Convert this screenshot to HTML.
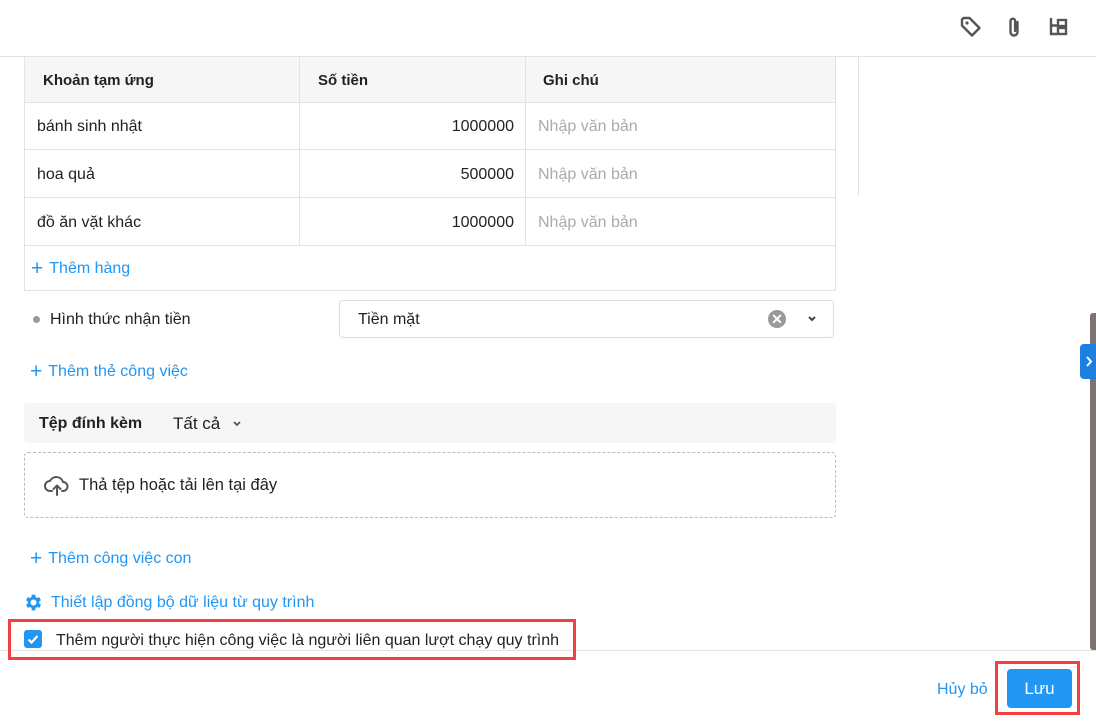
<!DOCTYPE html>
<html><head><meta charset="utf-8"><style>
*{box-sizing:border-box;margin:0;padding:0}
body{width:1096px;height:721px;position:relative;background:#fff;font-family:"Liberation Sans",sans-serif;font-size:16px;letter-spacing:0;color:#222;overflow:hidden}
.a{position:absolute}
.hl{background:#e3e3e3}
.blue{color:#2196f3}
.cell{position:absolute;display:flex;align-items:center;padding-top:2px}
.b{font-weight:bold;font-size:15px;letter-spacing:0}
</style></head><body>
<div class="a hl" style="left:0;top:56px;width:1096px;height:1px"></div>
<svg class="a" style="left:959px;top:15px" width="24" height="24" viewBox="0 0 24 24" fill="none" stroke="#555" stroke-width="2.4" stroke-linejoin="round"><path d="M3 4.5v6L13 20.5l7.5-7.5L10.5 3h-6z"/><circle cx="8" cy="8" r="1.6" fill="#555" stroke="none"/></svg>
<svg class="a" style="left:1005px;top:15px" width="18" height="24" viewBox="0 0 18 24" fill="none" stroke="#555" stroke-width="2.4" stroke-linecap="round"><path d="M12.5 7v10a3.5 3.5 0 0 1-7 0V6a2.3 2.3 0 0 1 4.6 0v10"/></svg>
<svg class="a" style="left:1048px;top:16px" width="22" height="22" viewBox="0 0 22 22" fill="none" stroke="#555" stroke-width="2.4"><path d="M3 2v16h6M3 9.5h6"/><rect x="10" y="4" width="8" height="6"/><rect x="10" y="12" width="8" height="6"/></svg>
<div class="a hl" style="left:858px;top:57px;width:1px;height:139px"></div>
<div class="a" style="left:24px;top:57px;width:812px;height:234px;border:1px solid #e3e3e3;border-top:none"></div>
<div class="a" style="left:25px;top:57px;width:810px;height:45px;background:#f6f6f6"></div>
<div class="a hl" style="left:24px;top:102px;width:812px;height:1px"></div>
<div class="a hl" style="left:24px;top:149px;width:812px;height:1px"></div>
<div class="a hl" style="left:24px;top:197px;width:812px;height:1px"></div>
<div class="a hl" style="left:24px;top:245px;width:812px;height:1px"></div>
<div class="a hl" style="left:299px;top:57px;width:1px;height:188px"></div>
<div class="a hl" style="left:525px;top:57px;width:1px;height:188px"></div>
<div class="cell b" style="left:43px;top:57px;height:45px">Khoản tạm ứng</div>
<div class="cell b" style="left:318px;top:57px;height:45px">Số tiền</div>
<div class="cell b" style="left:543px;top:57px;height:45px">Ghi chú</div>
<div class="cell" style="left:37px;top:103px;height:46px">bánh sinh nhật</div>
<div class="cell" style="left:300px;width:214px;justify-content:flex-end;top:103px;height:46px">1000000</div>
<div class="cell" style="left:538px;top:103px;height:46px;color:#aaa">Nhập văn bản</div>
<div class="cell" style="left:37px;top:150px;height:47px">hoa quả</div>
<div class="cell" style="left:300px;width:214px;justify-content:flex-end;top:150px;height:47px">500000</div>
<div class="cell" style="left:538px;top:150px;height:47px;color:#aaa">Nhập văn bản</div>
<div class="cell" style="left:37px;top:198px;height:47px">đồ ăn vặt khác</div>
<div class="cell" style="left:300px;width:214px;justify-content:flex-end;top:198px;height:47px">1000000</div>
<div class="cell" style="left:538px;top:198px;height:47px;color:#aaa">Nhập văn bản</div>
<div class="cell blue" style="left:31px;top:246px;height:44px"><span style="font-size:21px;margin-right:6px">+</span>Thêm hàng</div>
<div class="a" style="left:33px;top:316px;width:7px;height:7px;border-radius:50%;background:#999"></div>
<div class="cell" style="left:50px;top:300px;height:38px">Hình thức nhận tiền</div>
<div class="a" style="left:339px;top:300px;width:495px;height:38px;border:1px solid #ddd;border-radius:4px"></div>
<div class="cell" style="left:358px;top:300px;height:38px">Tiền mặt</div>
<div class="a" style="left:768px;top:310px;width:18px;height:18px;border-radius:50%;background:#999;color:#fff;font-size:14px;font-weight:bold;line-height:18px;text-align:center">✕</div>
<svg class="a" style="left:807px;top:315px" width="10" height="8" viewBox="0 0 10 8" fill="none" stroke="#444" stroke-width="2"><path d="M2 2l3 3 3-3"/></svg>
<div class="cell blue" style="left:30px;top:358px;height:26px"><span style="font-size:21px;margin-right:6px">+</span>Thêm thẻ công việc</div>
<div class="a" style="left:24px;top:403px;width:812px;height:40px;background:#f6f6f6;border-radius:4px"></div>
<div class="cell" style="left:39px;top:403px;height:40px;font-weight:bold;font-size:16px">Tệp đính kèm</div>
<div class="cell" style="left:173px;top:403px;height:40px;font-size:17px">Tất cả</div>
<svg class="a" style="left:232px;top:420px" width="10" height="8" viewBox="0 0 10 8" fill="none" stroke="#555" stroke-width="1.8"><path d="M2 2l3 3 3-3"/></svg>
<div class="a" style="left:24px;top:452px;width:812px;height:66px;border:1px dashed #bbb;border-radius:4px"></div>
<svg class="a" style="left:44px;top:474px" width="26" height="22" viewBox="0 0 26 22" fill="none" stroke="#555" stroke-width="2" stroke-linecap="round" stroke-linejoin="round"><path d="M8 17H6a5 5 0 0 1 0-10 7 7 0 0 1 13 1 4.5 4.5 0 0 1 0 9h-1"/><path d="M13 21v-9M9.5 15l3.5-3.5 3.5 3.5"/></svg>
<div class="cell" style="left:79px;top:471px;height:26px;font-size:16.5px">Thả tệp hoặc tải lên tại đây</div>
<div class="cell blue" style="left:30px;top:545px;height:26px"><span style="font-size:21px;margin-right:6px">+</span>Thêm công việc con</div>
<svg class="a" style="left:23px;top:592px" width="21" height="21" viewBox="0 0 24 24" fill="#2196f3"><path d="M19.4 13a7.6 7.6 0 0 0 0-2l2.1-1.6-2-3.5-2.5 1a7 7 0 0 0-1.7-1L15 3h-4l-.4 2.9a7 7 0 0 0-1.7 1l-2.5-1-2 3.5L6.6 11a7.6 7.6 0 0 0 0 2l-2.1 1.6 2 3.5 2.5-1a7 7 0 0 0 1.7 1L11 21h4l.4-2.9a7 7 0 0 0 1.7-1l2.5 1 2-3.5zM13 15.5a3.5 3.5 0 1 1 0-7 3.5 3.5 0 0 1 0 7z" transform="translate(-1 0)"/></svg>
<div class="cell blue" style="left:51px;top:589px;height:26px">Thiết lập đồng bộ dữ liệu từ quy trình</div>
<div class="a hl" style="left:0;top:650px;width:1096px;height:1px"></div>
<div class="a" style="left:8px;top:619px;width:568px;height:41px;border:3px solid #f44040"></div>
<div class="a" style="left:24px;top:630px;width:18px;height:18px;border-radius:3px;background:#2196f3"></div>
<svg class="a" style="left:24px;top:630px" width="18" height="18" viewBox="0 0 18 18" fill="none" stroke="#fff" stroke-width="2.2"><path d="M4.5 9.5l3 3 6-6.5"/></svg>
<div class="cell" style="left:56px;top:627px;height:26px">Thêm người thực hiện công việc là người liên quan lượt chạy quy trình</div>
<div class="a" style="left:1090px;top:313px;width:6px;height:337px;background:#7b7272;border-radius:3px 0 0 3px"></div>
<div class="a" style="left:1080px;top:344px;width:16px;height:35px;background:#1e7fe0;border-radius:4px 0 0 4px"></div>
<svg class="a" style="left:1084px;top:355px" width="10" height="13" viewBox="0 0 10 13" fill="none" stroke="#fff" stroke-width="2"><path d="M3 2l4 4.5L3 11"/></svg>
<div class="cell blue" style="left:937px;top:676px;height:26px">Hủy bỏ</div>
<div class="a" style="left:995px;top:661px;width:85px;height:54px;border:3px solid #f44040"></div>
<div class="a" style="left:1007px;top:669px;width:65px;height:39px;background:#2196f3;border-radius:4px;color:#fff;font-size:17px;display:flex;align-items:center;justify-content:center">Lưu</div>
</body></html>
